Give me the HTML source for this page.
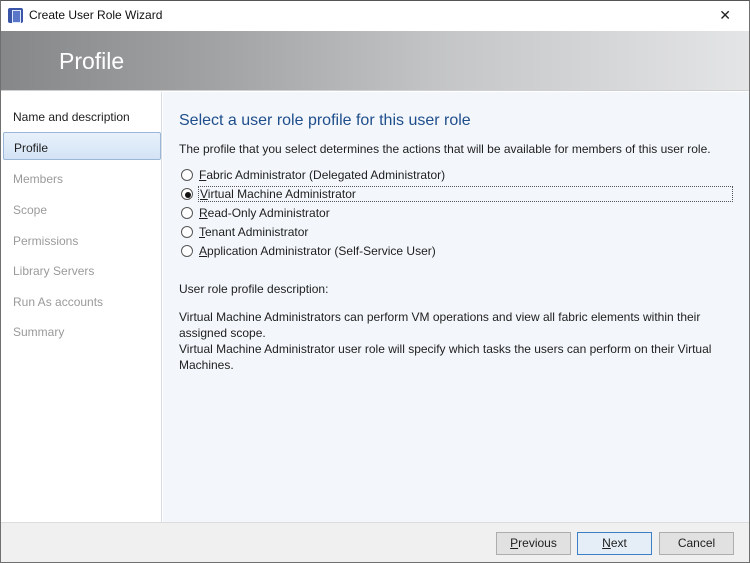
<!DOCTYPE html>
<html><head><style>
*{margin:0;padding:0;box-sizing:border-box}
body{width:750px;height:563px;overflow:hidden;font-family:"Liberation Sans",sans-serif;font-size:12px;color:#1e1e1e;background:#fff;position:relative}
.frame{position:absolute;inset:0;border:1px solid #707070;border-top:1px solid #555}
.title{position:absolute;left:0;top:0;width:750px;height:31px;background:#fff}
.title span{position:absolute;left:29px;top:8px;font-size:12px;color:#111}
.icon{position:absolute;left:8px;top:8px;width:15px;height:15px;background:#3a55a8;border-radius:2px}
.icon:after{content:"";position:absolute;left:4px;top:2px;width:7px;height:11px;border:1px solid #dfe6ff;background:#5a76c8}
.close{position:absolute;right:19px;top:7px;font-size:14px;color:#222;font-weight:normal}
.header{position:absolute;left:1px;top:31px;width:748px;height:60px;background:linear-gradient(90deg,#858789 0%,#a2a4a6 30%,#c5c6c8 60%,#e4e5e6 100%);border-bottom:1px solid #d0d0d0}
.header span{position:absolute;left:58px;top:17px;font-size:23px;color:#fff}
.left{position:absolute;left:1px;top:92px;width:161px;height:430px;background:#fff;border-right:1px solid #d8dde3}
.left div{position:absolute;left:12px;font-size:12px;color:#9a9a9a}
.sel{left:2px!important;width:158px;height:28px;top:40px;background:linear-gradient(#e8f1fb,#d3e3f5);border:1px solid #9bb6d6;border-radius:2px;color:#1e1e1e!important;padding:8px 0 0 10px}
.main{position:absolute;left:163px;top:92px;width:586px;height:430px;background:#f3f7fb}
.main h1{position:absolute;left:16px;top:20px;font-size:16px;font-weight:normal;color:#1f4e8c}
.p{position:absolute;left:16px;font-size:12px}
.r{position:absolute;left:18px;font-size:12px}
.r i{position:absolute;left:0;top:1px;width:12px;height:12px;border:1px solid #555;border-radius:50%;background:#fff}
.r b{position:absolute;left:3px;top:3px;width:6px;height:6px;border-radius:50%;background:#111}
.r span{position:absolute;left:18px;white-space:nowrap}
.foot{position:absolute;left:1px;top:522px;width:748px;height:40px;background:#f0f0f0;border-top:1px solid #dcdcdc}
.btn{position:absolute;top:9px;width:75px;height:23px;border:1px solid #adadad;background:#e1e1e1;text-align:center;line-height:21px;font-size:12px}
</style></head><body>
<div class="title"><div class="icon"></div><span>Create User Role Wizard</span><div class="close">✕</div></div>
<div class="header"><span>Profile</span></div>
<div class="left">
<div style="top:18px;color:#1e1e1e">Name and description</div>
<div class="sel">Profile</div>
<div style="top:80px">Members</div>
<div style="top:111px">Scope</div>
<div style="top:142px">Permissions</div>
<div style="top:172px">Library Servers</div>
<div style="top:203px">Run As accounts</div>
<div style="top:233px">Summary</div>
</div>
<div class="main">
<h1>Select a user role profile for this user role</h1>
<div class="p" style="top:50px">The profile that you select determines the actions that will be available for members of this user role.</div>
<div class="r" style="top:76px"><i></i><span><u>F</u>abric Administrator (Delegated Administrator)</span></div>
<div class="r" style="top:95px"><i><b></b></i><span style="outline:1px dotted #555;width:533px;padding-left:1px"><u>V</u>irtual Machine Administrator</span></div>
<div class="r" style="top:114px"><i></i><span><u>R</u>ead-Only Administrator</span></div>
<div class="r" style="top:133px"><i></i><span><u>T</u>enant Administrator</span></div>
<div class="r" style="top:152px"><i></i><span><u>A</u>pplication Administrator (Self-Service User)</span></div>
<div class="p" style="top:190px">User role profile description:</div>
<div class="p" style="top:217px;width:540px;line-height:16px">Virtual Machine Administrators can perform VM operations and view all fabric elements within their assigned scope.<br>Virtual Machine Administrator user role will specify which tasks the users can perform on their Virtual Machines.</div>
</div>
<div class="foot">
<div class="btn" style="left:495px"><u>P</u>revious</div>
<div class="btn" style="left:576px;border-color:#3c7fc4;background:#e5eef7"><u>N</u>ext</div>
<div class="btn" style="left:658px">Cancel</div>
</div>
<div class="frame"></div>
</body></html>
